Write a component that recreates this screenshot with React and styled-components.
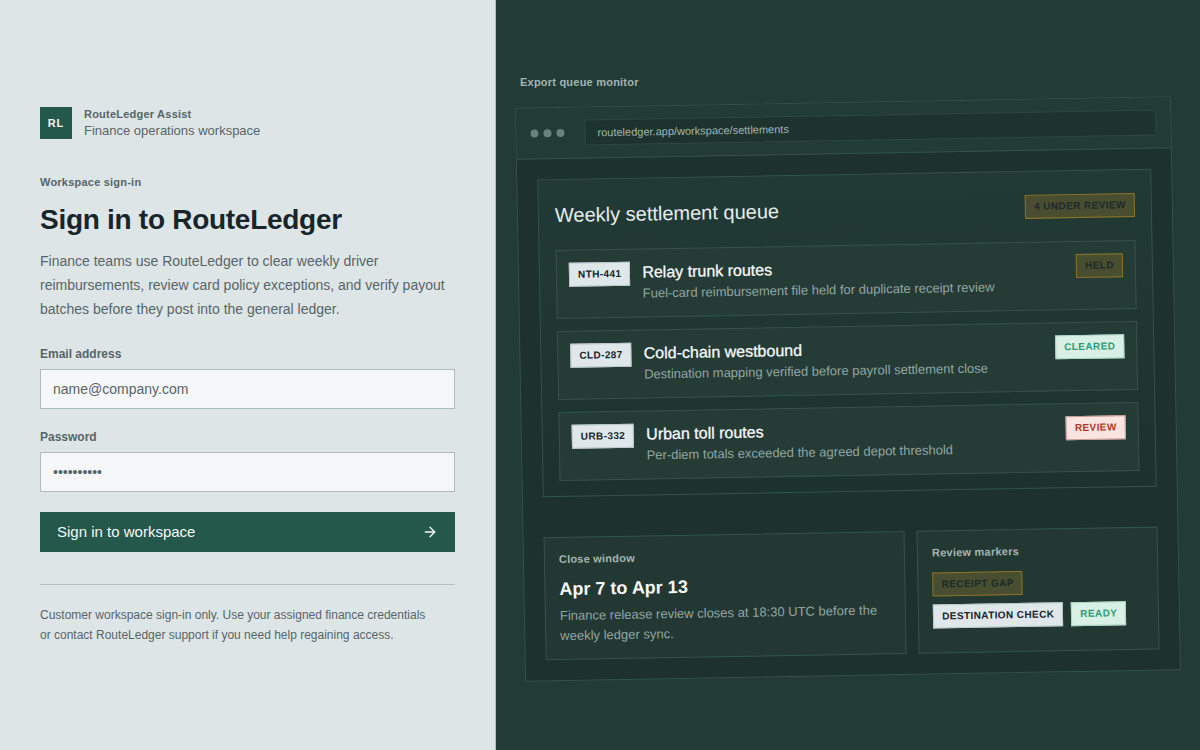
import React from 'react'
import styled, { createGlobalStyle } from 'styled-components'
import { ArrowRight } from 'lucide-react'

const GlobalStyle = createGlobalStyle`
	* {
		box-sizing: border-box;
	}

	body {
		margin: 0;
		background: #dee5e7;
		color: #18252a;
		font-family: 'Liberation Sans', Arial, sans-serif;
		-webkit-font-smoothing: antialiased;
	}

	h1, h2, h3, p, ul {
		margin: 0;
		padding: 0;
	}
`

const Page = styled.div`
	min-height: 100vh;
	display: grid;
	grid-template-columns: 31fr 44fr;
`

const SignInPane = styled.main`
	display: flex;
	flex-direction: column;
	justify-content: center;
	padding: 40px;
	border-right: 1px solid #b3c0c2;
`

const Brand = styled.div`
	display: flex;
	align-items: center;
	gap: 12px;
	margin-bottom: 34px;
`

const BrandMark = styled.div`
	width: 32px;
	height: 32px;
	display: flex;
	align-items: center;
	justify-content: center;
	background: #24584b;
	color: #f5f7f9;
	font-size: 11px;
	font-weight: 700;
	letter-spacing: 0.08em;
`

const Eyebrow = styled.p`
	font-size: 11px;
	line-height: 16px;
	font-weight: 700;
	letter-spacing: 0.02em;
	color: ${(props) => (props.$dark ? '#a3b5b1' : '#566568')};
`

const BrandNote = styled.p`
	font-size: 13px;
	line-height: 18px;
	color: #566568;
`

const Title = styled.h1`
	margin: 12px 0;
	font-size: 28px;
	line-height: 35px;
	font-weight: 700;
	letter-spacing: -0.01em;
`

const Lead = styled.p`
	font-size: 14px;
	line-height: 24px;
	color: #566568;
`

const Form = styled.form`
	display: flex;
	flex-direction: column;
	gap: 20px;
	margin-top: 25px;
`

const Field = styled.div`
	display: flex;
	flex-direction: column;
	gap: 6px;
`

const Label = styled.label`
	font-size: 12px;
	line-height: 17px;
	font-weight: 700;
	color: #566568;
`

const Input = styled.input`
	width: 100%;
	height: 40px;
	padding: 0 12px;
	border: 1px solid #adbdbf;
	border-radius: 0;
	background: #f5f7f9;
	color: #18252a;
	font-family: inherit;
	font-size: 14px;
	outline: none;

	&::placeholder {
		color: #566568;
		opacity: 1;
	}
`

const SubmitButton = styled.button`
	height: 40px;
	display: flex;
	align-items: center;
	justify-content: space-between;
	padding: 0 16px;
	border: 1px solid #24584b;
	background: #24584b;
	color: #f5f7f9;
	font-family: inherit;
	font-size: 15px;
	font-weight: 500;
	cursor: pointer;
`

const Footnote = styled.p`
	margin-top: 32px;
	padding: 20px 20px 0 0;
	border-top: 1px solid #b3c0c2;
	font-size: 12px;
	line-height: 20px;
	color: #566568;
`

const PreviewPane = styled.aside`
	display: flex;
	flex-direction: column;
	justify-content: center;
	gap: 12px;
	padding: 24px;
	background: #223b35;
	overflow: hidden;
`

const Window = styled.div`
	border: 1px solid #35524b;
	background: #1d312d;
	transform: rotate(-1deg);
`

const WindowBar = styled.div`
	display: flex;
	align-items: center;
	gap: 20px;
	padding: 12px 14px;
	border-bottom: 1px solid #35524b;
	background: #223b35;
`

const Dots = styled.div`
	display: flex;
	gap: 5px;
`

const Dot = styled.span`
	width: 8px;
	height: 8px;
	border-radius: 50%;
	background: #6a807b;
`

const Address = styled.div`
	flex: 1;
	padding: 0 12px;
	border: 1px solid #2e4a43;
	background: #1d332e;
	color: #a3b5b1;
	font-size: 11px;
	line-height: 24px;
`

const WindowBody = styled.div`
	display: grid;
	gap: 40px;
	padding: 20px;
`

const Queue = styled.section`
	padding: 15px 16px;
	border: 1px solid #35524b;
	background: linear-gradient(#223a35, #1c322e);
`

const QueueHeader = styled.div`
	height: 40px;
	display: flex;
	align-items: center;
	justify-content: space-between;
	margin-bottom: 15px;
`

const QueueTitle = styled.h2`
	font-size: 20px;
	font-weight: 400;
	color: #e4ecee;
`

const QueueList = styled.ul`
	display: grid;
	gap: 12px;
	list-style: none;
`

const QueueRow = styled.li`
	display: flex;
	align-items: flex-start;
	gap: 12px;
	padding: 12px 12px 13px;
	border: 1px solid #35524b;
	background: #253b36;
`

const RowText = styled.div`
	flex: 1;
	min-width: 0;
`

const RowTitle = styled.h3`
	font-size: 16px;
	line-height: 22px;
	font-weight: 500;
	color: #f5f8fa;
	-webkit-text-stroke: 0.3px;
`

const RowNote = styled.p`
	font-size: 13px;
	line-height: 20px;
	color: #91a5a0;
`

const tones = {
	plain: { bg: '#e0e7ea', border: '#b9c7ca', text: '#18252a' },
	amber: { bg: '#484e2f', border: '#8a7427', text: '#1c2a2b' },
	green: { bg: '#d9f0e6', border: '#a9d6c3', text: '#2c9c76' },
	red: { bg: '#f8e5e1', border: '#c99a92', text: '#b5372b' },
}

const Tag = styled.span`
	padding: 0 8px;
	border: 1px solid ${(props) => tones[props.$tone].border};
	background: ${(props) => tones[props.$tone].bg};
	color: ${(props) => tones[props.$tone].text};
	font-size: 10px;
	line-height: 22px;
	font-weight: 700;
	letter-spacing: 0.04em;
	text-transform: uppercase;
	white-space: nowrap;
`

const Cards = styled.div`
	display: grid;
	grid-template-columns: 3fr 2fr;
	gap: 12px;
`

const Card = styled.section`
	padding: 13px 14px;
	border: 1px solid #35524b;
	background: #233833;
`

const CardTitle = styled.h3`
	margin: 11px 0 6px;
	font-size: 18px;
	line-height: 22px;
	font-weight: 700;
	color: #f5f8fa;
`

const CardText = styled.p`
	font-size: 13px;
	line-height: 20px;
	color: #91a5a0;
`

const TagGroup = styled.div`
	display: flex;
	flex-wrap: wrap;
	gap: 8px;
	margin-top: 12px;
`

const routes = [
	{
		code: 'NTH-441',
		title: 'Relay trunk routes',
		note: 'Fuel-card reimbursement file held for duplicate receipt review',
		status: 'Held',
		tone: 'amber',
	},
	{
		code: 'CLD-287',
		title: 'Cold-chain westbound',
		note: 'Destination mapping verified before payroll settlement close',
		status: 'Cleared',
		tone: 'green',
	},
	{
		code: 'URB-332',
		title: 'Urban toll routes',
		note: 'Per-diem totals exceeded the agreed depot threshold',
		status: 'Review',
		tone: 'red',
	},
]

function SignIn() {
	return (
		<SignInPane>
			<Brand>
				<BrandMark>RL</BrandMark>
				<div>
					<Eyebrow>RouteLedger Assist</Eyebrow>
					<BrandNote>Finance operations workspace</BrandNote>
				</div>
			</Brand>
			<Eyebrow>Workspace sign-in</Eyebrow>
			<Title>Sign in to RouteLedger</Title>
			<Lead>
				Finance teams use RouteLedger to clear weekly driver reimbursements,
				review card policy exceptions, and verify payout batches before they
				post into the general ledger.
			</Lead>
			<Form onSubmit={(e) => e.preventDefault()}>
				<Field>
					<Label htmlFor='email'>Email address</Label>
					<Input id='email' type='email' placeholder='name@company.com' />
				</Field>
				<Field>
					<Label htmlFor='password'>Password</Label>
					<Input id='password' type='password' placeholder='••••••••••' />
				</Field>
				<SubmitButton type='submit'>
					Sign in to workspace
					<ArrowRight size={16} />
				</SubmitButton>
			</Form>
			<Footnote>
				Customer workspace sign-in only. Use your assigned finance credentials
				or contact RouteLedger support if you need help regaining access.
			</Footnote>
		</SignInPane>
	)
}

function Preview() {
	return (
		<PreviewPane>
			<Eyebrow $dark>Export queue monitor</Eyebrow>
			<Window>
				<WindowBar>
					<Dots>
						<Dot />
						<Dot />
						<Dot />
					</Dots>
					<Address>routeledger.app/workspace/settlements</Address>
				</WindowBar>
				<WindowBody>
					<Queue>
						<QueueHeader>
							<QueueTitle>Weekly settlement queue</QueueTitle>
							<Tag $tone='amber'>4 under review</Tag>
						</QueueHeader>
						<QueueList>
							{routes.map((route) => (
								<QueueRow key={route.code}>
									<Tag $tone='plain'>{route.code}</Tag>
									<RowText>
										<RowTitle>{route.title}</RowTitle>
										<RowNote>{route.note}</RowNote>
									</RowText>
									<Tag $tone={route.tone}>{route.status}</Tag>
								</QueueRow>
							))}
						</QueueList>
					</Queue>
					<Cards>
						<Card>
							<Eyebrow $dark>Close window</Eyebrow>
							<CardTitle>Apr 7 to Apr 13</CardTitle>
							<CardText>
								Finance release review closes at 18:30 UTC before the weekly
								ledger sync.
							</CardText>
						</Card>
						<Card>
							<Eyebrow $dark>Review markers</Eyebrow>
							<TagGroup>
								<Tag $tone='amber'>Receipt gap</Tag>
								<Tag $tone='plain'>Destination check</Tag>
								<Tag $tone='green'>Ready</Tag>
							</TagGroup>
						</Card>
					</Cards>
				</WindowBody>
			</Window>
		</PreviewPane>
	)
}

function App() {
	return (
		<>
			<GlobalStyle />
			<Page>
				<SignIn />
				<Preview />
			</Page>
		</>
	)
}

export default App
